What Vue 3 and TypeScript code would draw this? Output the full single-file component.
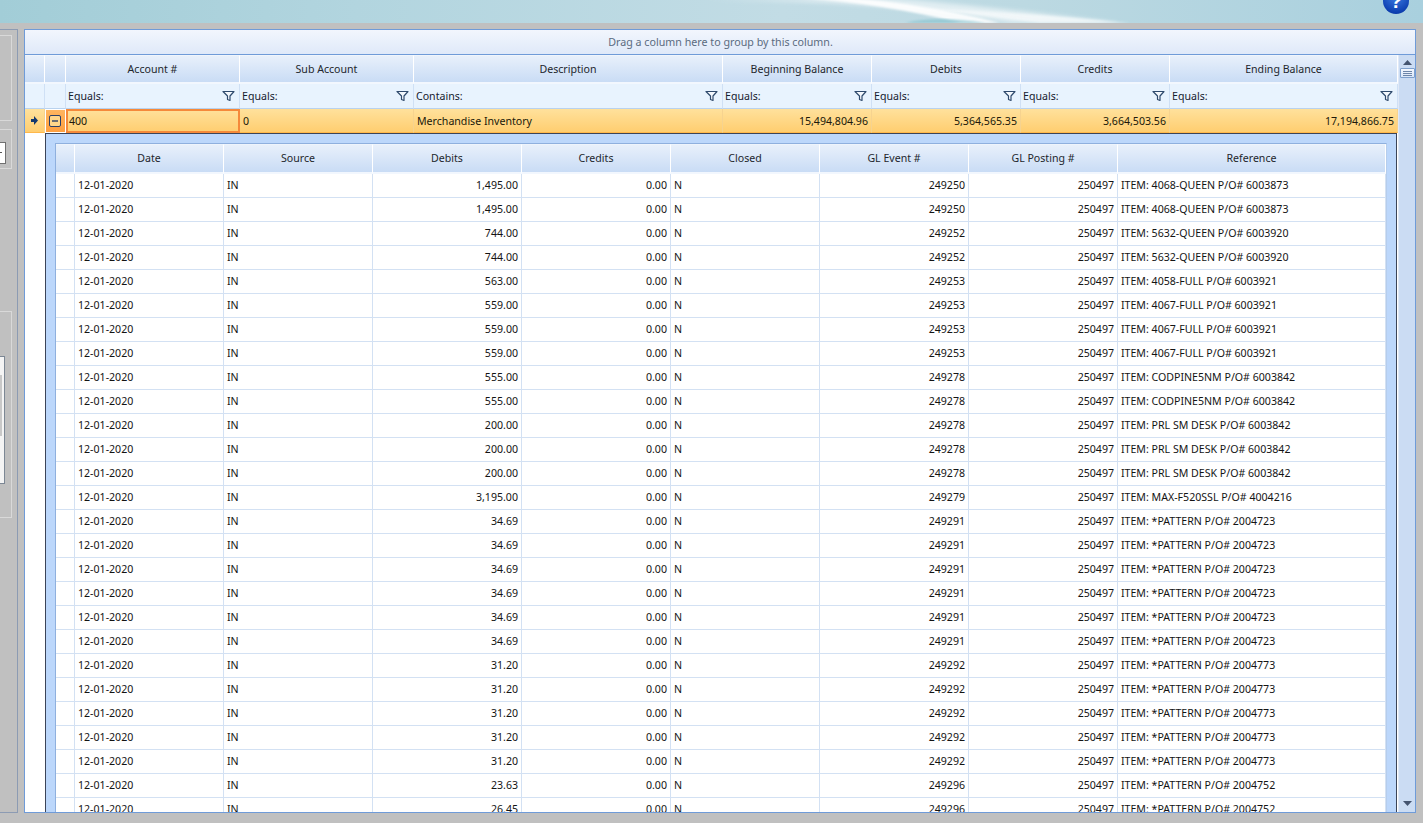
<script setup lang="ts">
interface Row { debit: string; ev: string; ref: string }
const masterCols = [
  { t: 'Account #', f: 'Equals:' },
  { t: 'Sub Account', f: 'Equals:' },
  { t: 'Description', f: 'Contains:' },
  { t: 'Beginning Balance', f: 'Equals:' },
  { t: 'Debits', f: 'Equals:' },
  { t: 'Credits', f: 'Equals:' },
  { t: 'Ending Balance', f: 'Equals:' },
]
const detailCols = ['Date', 'Source', 'Debits', 'Credits', 'Closed', 'GL Event #', 'GL Posting #', 'Reference']
const spec: [string, string, string, number][] = [
  ['1,495.00', '249250', 'ITEM: 4068-QUEEN P/O# 6003873', 2],
  ['744.00', '249252', 'ITEM: 5632-QUEEN P/O# 6003920', 2],
  ['563.00', '249253', 'ITEM: 4058-FULL P/O# 6003921', 1],
  ['559.00', '249253', 'ITEM: 4067-FULL P/O# 6003921', 3],
  ['555.00', '249278', 'ITEM: CODPINE5NM P/O# 6003842', 2],
  ['200.00', '249278', 'ITEM: PRL SM DESK P/O# 6003842', 3],
  ['3,195.00', '249279', 'ITEM: MAX-F520SSL P/O# 4004216', 1],
  ['34.69', '249291', 'ITEM: *PATTERN P/O# 2004723', 6],
  ['31.20', '249292', 'ITEM: *PATTERN P/O# 2004773', 5],
  ['23.63', '249296', 'ITEM: *PATTERN P/O# 2004752', 1],
  ['26.45', '249296', 'ITEM: *PATTERN P/O# 2004752', 1],
]
const rows: Row[] = spec.flatMap(([debit, ev, ref, n]) =>
  Array.from({ length: n }, () => ({ debit, ev, ref })),
)
</script>

<template>
  <div class="page">
    <header class="banner">
      <svg class="swoosh" width="1423" height="23" viewBox="0 0 1423 23" aria-hidden="true">
        <defs>
          <filter id="blur-a"><feGaussianBlur stdDeviation="2" /></filter>
          <filter id="blur-b"><feGaussianBlur stdDeviation="1" /></filter>
        </defs>
        <path d="M700 0 C830 0 920 8 1010 23 L1120 23 C1030 12 950 2 880 -2 Z" fill="#fff" opacity=".55" filter="url(#blur-a)" />
        <path d="M800 -2 C860 2 910 10 960 23 L1000 23 C950 10 900 2 850 -2 Z" fill="#fff" opacity=".9" filter="url(#blur-b)" />
        <path d="M920 8 C1000 12 1060 16 1130 23 L1040 23 C1000 18 960 12 920 8 Z" fill="#fff" opacity=".55" filter="url(#blur-b)" />
        <path d="M905 23 C925 18 950 18 985 23 Z" fill="#8cc5d0" opacity=".8" filter="url(#blur-b)" />
      </svg>
      <div class="help"><span>?</span></div>
    </header>

    <div class="workspace">
      <aside class="side">
        <div class="box box-one"></div>
        <div class="box box-two"><div class="input"><i></i></div></div>
        <div class="box box-three">
          <div class="list"><div class="list-bar"></div></div>
        </div>
      </aside>

      <main class="panel">
        <div class="group-bar">Drag a column here to group by this column.</div>
        <div class="grid-area">
          <div class="grid">
            <div class="m-row m-head">
              <div class="hcell"></div>
              <div class="hcell"></div>
              <div v-for="c in masterCols" :key="c.t" class="hcell">{{ c.t }}</div>
            </div>
            <div class="m-row m-filter">
              <div class="fcell"></div>
              <div class="fcell"></div>
              <div v-for="c in masterCols" :key="c.t" class="fcell">
                <span>{{ c.f }}</span>
                <svg class="funnel" width="13" height="12" viewBox="0 0 13 12" aria-hidden="true">
                  <path d="M1 1.500h11L8 6v4.500L5.500 9.500V6Z" fill="#f4f8fd" stroke="#2f4a6d" stroke-width="1.200" stroke-linejoin="round" />
                </svg>
              </div>
            </div>
            <div class="m-row m-data">
              <div class="dcell ind">
                <svg width="7" height="9" viewBox="0 0 7 9" aria-hidden="true"><path d="M0 3h3V0l4 4.500L3 9V6H0Z" fill="#15396e" /></svg>
              </div>
              <div class="dcell exp">
                <svg width="13" height="13" viewBox="0 0 13 13" aria-hidden="true">
                  <rect x=".5" y=".5" width="11" height="11" rx="1.500" fill="#ffd68a" stroke="#2c3f66" />
                  <path d="M3 6h6" stroke="#2c3f66" stroke-width="1.400" />
                </svg>
              </div>
              <div class="dcell active">400</div>
              <div class="dcell">0</div>
              <div class="dcell">Merchandise Inventory</div>
              <div class="dcell num">15,494,804.96</div>
              <div class="dcell num">5,364,565.35</div>
              <div class="dcell num">3,664,503.56</div>
              <div class="dcell num">17,194,866.75</div>
            </div>

            <div class="detail-wrap">
              <div class="gutter"></div>
              <div class="detail-pad">
                <div class="detail">
                  <div class="d-row d-head">
                    <div class="hcell"></div>
                    <div v-for="c in detailCols" :key="c" class="hcell">{{ c }}</div>
                  </div>
                  <div v-for="(r, i) in rows" :key="i" class="d-row d-data">
                    <div class="cell"></div>
                    <div class="cell">12-01-2020</div>
                    <div class="cell">IN</div>
                    <div class="cell num">{{ r.debit }}</div>
                    <div class="cell num">0.00</div>
                    <div class="cell">N</div>
                    <div class="cell num">{{ r.ev }}</div>
                    <div class="cell num">250497</div>
                    <div class="cell">{{ r.ref }}</div>
                  </div>
                </div>
              </div>
            </div>
          </div>

          <div class="scroll">
            <svg class="arrow-up" width="9" height="5" viewBox="0 0 9 5" aria-hidden="true"><path d="M4.500 0 9 5H0Z" fill="#44546f" /></svg>
            <div class="thumb"><i></i><i></i><i></i></div>
            <div class="track"></div>
            <svg class="arrow-down" width="9" height="5" viewBox="0 0 9 5" aria-hidden="true"><path d="M0 0h9L4.500 5Z" fill="#44546f" /></svg>
          </div>
        </div>
      </main>
    </div>
  </div>
</template>

<style>
html, body { margin: 0; overflow: hidden; background: #c0c0c0; }
</style>

<style scoped>
.page {
  width: 1423px;
  height: 823px;
  overflow: hidden;
  background: #c0c0c0;
  font: 10.6px/14px "Noto Sans", "Open Sans", sans-serif;
  color: #141414;
}
.banner {
  position: relative;
  height: 23px;
  overflow: hidden;
  background: linear-gradient(90deg, #a2cdd7 0%, #b2d5df 25%, #c2dce5 55%, #bcd9e2 72%, #a9d0de 100%);
}
.swoosh { position: absolute; left: 0; top: 0; }
.help {
  position: absolute;
  left: 1383px;
  top: -12px;
  width: 26px;
  height: 26px;
  border-radius: 50%;
  background: radial-gradient(circle at 50% 30%, #3f7fe6, #0d3fb0 75%, #0a2f8f);
  display: flex;
  justify-content: center;
  color: #fff;
  font: bold 20px/26px "Liberation Sans", sans-serif;
}
.workspace {
  display: flex;
  gap: 6px;
  margin-top: 6px;
  height: 784px;
}
.side {
  width: 17px;
  flex: none;
  border-right: 1px solid #8c9bb3;
  border-top: 1px solid #8c9bb3;
  border-bottom: 1px solid #8c9bb3;
  box-sizing: content-box;
  height: 782px;
  display: block;
}
.box {
  width: 12px;
  box-sizing: border-box;
  border: 1px solid #d9d9d9;
  border-left: 0;
}
.box-one { height: 86px; margin-top: 5px; }
.box-two { height: 40px; margin-top: 8px; padding-top: 12px; }
.box-three { height: 207px; margin-top: 142px; padding-top: 44px; }
.input {
  width: 6px;
  height: 22px;
  box-sizing: border-box;
  background: #fff;
  border: 1px solid #707070;
  border-left: 0;
  position: relative;
}
.input i { position: absolute; left: 0; top: 9px; width: 2px; height: 1px; background: #555; }
.list {
  width: 5px;
  height: 128px;
  box-sizing: border-box;
  background: #f4f4f4;
  border: 1px solid #7c8794;
  border-left: 0;
  padding-top: 18px;
}
.list-bar { width: 2px; height: 61px; background: #c8c8c8; }
.panel {
  width: 1392px;
  flex: none;
  box-sizing: border-box;
  border: 1px solid #6f9bd8;
  background: #fff;
  display: flex;
  flex-direction: column;
  overflow: hidden;
}
.group-bar {
  height: 24px;
  flex: none;
  box-sizing: border-box;
  display: flex;
  align-items: center;
  justify-content: center;
  background: linear-gradient(#f2f6fd, #dfe9f9);
  color: #5b6b80;
  font-size: 10.7px;
  padding: 0 0 1px 1px;
}
.grid-area {
  flex: 1;
  display: flex;
  min-height: 0;
  border-top: 1px solid #6f9bd8;
}
.grid {
  width: 1373px;
  flex: none;
  display: flex;
  flex-direction: column;
  min-height: 0;
  overflow: hidden;
}
.m-row {
  display: grid;
  grid-template-columns: 20px 21px 174px 174px 309px 149px 149px 149px 228px;
  flex: none;
}
.m-head { height: 29px; }
.hcell {
  box-sizing: border-box;
  border-right: 1px solid #fff;
  border-bottom: 1px solid #fff;
  border-top: 1px solid #f0f5fc;
  background: linear-gradient(#e8f0fb, #c9dcf5);
  display: flex;
  align-items: center;
  justify-content: center;
  color: #22262c;
}
.m-head .hcell { border-bottom: 2px solid #f2f7fe; }
.m-filter { height: 25px; }
.fcell {
  box-sizing: border-box;
  background: #e8f3fe;
  border-right: 1px solid #cfe0f5;
  border-bottom: 1px solid #b9d2ee;
  display: flex;
  align-items: center;
  justify-content: space-between;
  padding: 0 4px 1px 2px;
  color: #15202e;
}
.funnel { flex: none; }
.m-data {
  height: 24px;
  background: linear-gradient(#ffe19c, #ffcd6e);
}
.dcell {
  box-sizing: border-box;
  display: flex;
  align-items: center;
  padding: 0 3px;
  border-right: 1px solid #f6d38f;
  border-bottom: 1px solid #ffb84a;
  color: #20180a;
}
.ind { justify-content: center; padding: 0; }
.exp {
  justify-content: center;
  padding: 0;
  border: 1px solid #fff;
  background: linear-gradient(#ffb55f, #ff9f3f);
}
.active {
  border: 2px solid #f5893a;
  padding: 0 1px;
}
.num { justify-content: flex-end; text-align: right; }
.detail-wrap {
  flex: 1;
  display: flex;
  min-height: 0;
  overflow: hidden;
}
.gutter { width: 20px; flex: none; background: #fff; }
.detail-pad {
  width: 1352px;
  flex: none;
  box-sizing: border-box;
  border-top: 1px solid #3b4458;
  border-left: 1px solid #3b4458;
  border-right: 1px solid #3b4458;
  padding: 9px 9px 0;
  background: #bcd7fb;
  min-height: 0;
  overflow: hidden;
}
.detail {
  width: 1332px;
  box-sizing: border-box;
  border-left: 1px solid #8fb0de;
  border-top: 1px solid #8fb0de;
  border-right: 1px solid #b6cdec;
  background: #fff;
  height: 700px;
}
.d-row {
  display: grid;
  grid-template-columns: 19px repeat(7, 149px) 268px;
}
.d-head { height: 30px; }
.d-head .hcell { border-bottom: 2px solid #f2f7fe; border-top-color: #eef4fc; padding-bottom: 2px; }
.d-data { height: 24px; }
.cell {
  box-sizing: border-box;
  display: flex;
  align-items: center;
  padding: 0 3px 2px;
  border-right: 1px solid #d3e1f3;
  border-bottom: 1px solid #d3e1f3;
  white-space: nowrap;
}
.scroll {
  width: 17px;
  flex: none;
  display: flex;
  flex-direction: column;
  align-items: center;
  background: #cbdcf3;
  border-left: 1px solid #e0e9f7;
  box-sizing: border-box;
  padding-top: 5px;
}
.arrow-up { flex: none; margin-bottom: 3px; }
.thumb {
  width: 15px;
  height: 10px;
  flex: none;
  box-sizing: border-box;
  border: 1px solid #7fa0cc;
  border-radius: 1px;
  background: linear-gradient(#f4f8fe, #d9e6f8);
  display: flex;
  flex-direction: column;
  align-items: center;
  justify-content: center;
  gap: 1px;
}
.thumb i { width: 9px; height: 1px; background: #6d85a8; }
.track { flex: 1; }
.arrow-down { flex: none; margin-bottom: 6px; }
</style>
